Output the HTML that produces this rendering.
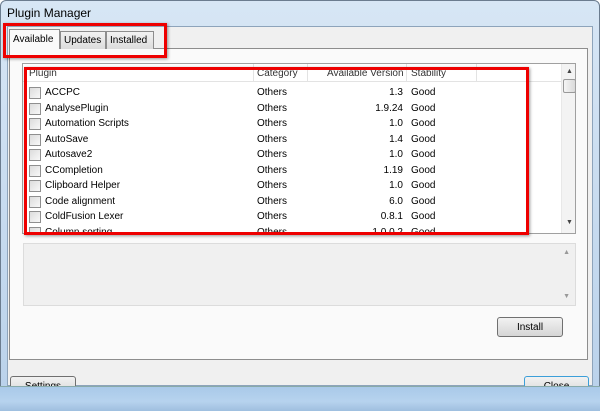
<!DOCTYPE html>
<html><head><style>
*{margin:0;padding:0;box-sizing:border-box}
body{width:600px;height:411px;overflow:hidden;background:#fff;font-family:"Liberation Sans",Tahoma,sans-serif;font-size:10px;color:#000;position:relative}
.frame{position:absolute;left:0;top:0;width:600px;height:411px;background:linear-gradient(#d7e6f5,#b9d1ea);border-radius:6px 6px 0 0;border:1px solid #6b7c8f}
.title{position:absolute;left:7px;top:6px;font-size:12px;color:#000}
.client{position:absolute;left:7px;top:26px;width:586px;height:360px;background:#f0f0f0;border:1px solid #8ea4bb}
.abs{position:absolute}
.tab{position:absolute;top:31px;height:18px;border:1px solid #8d8d8d;border-bottom:none;background:linear-gradient(#f2f2f2,#dcdcdc);font-size:10px;padding:3px 3px 0}
.panel{position:absolute;left:9px;top:48px;width:579px;height:312px;background:#fafafa;border:1px solid #8d8d8d}
.list{position:absolute;left:22px;top:63px;width:554px;height:171px;background:#fff;border:1px solid #a0a0a0;overflow:hidden}
.hdr{position:absolute;left:0;top:0;width:538px;height:18px;border-bottom:1px solid #e3e3e3;background:#fff}
.hdr span{position:absolute;top:4px;color:#333}
.row{position:absolute;left:0;height:15px;width:538px}
.row span{position:absolute;top:2px}
.cb{position:absolute;left:6px;top:2px;width:12px;height:12px;border:1px solid #8f8f8f;background:linear-gradient(135deg,#dcdcdc,#f8f8f8)}
.sb{position:absolute;left:538px;top:0;width:15px;height:169px;background:#f3f3f3;border-left:1px solid #e8e8e8}
.red{position:absolute;border:3px solid #e00;box-shadow:1px 1px 3px rgba(0,0,0,.4)}
.btn{position:absolute;height:20px;border:1px solid #707070;border-radius:3px;background:linear-gradient(#f2f2f2,#d5d5d5);text-align:center;font-size:10px;padding-top:4px}
</style></head><body>
<div class="frame"></div>
<div class="title">Plugin Manager</div>
<div class="client"></div>
<div class="panel"></div>
<div class="tab" style="left:9px;top:29px;width:51px;height:20px;background:#fafafa;padding-top:4px;z-index:2">Available</div>
<div class="tab" style="left:60px;width:46px">Updates</div>
<div class="tab" style="left:106px;width:48px">Installed</div>
<div class="list">
<div class="hdr"><span style="left:6px">Plugin</span><span style="left:234px">Category</span><span style="left:304px">Available Version</span><span style="left:388px">Stability</span>
<div class="abs" style="left:230px;top:0;width:1px;height:18px;background:#e3e3e3"></div>
<div class="abs" style="left:284px;top:0;width:1px;height:18px;background:#e3e3e3"></div>
<div class="abs" style="left:383px;top:0;width:1px;height:18px;background:#e3e3e3"></div>
<div class="abs" style="left:453px;top:0;width:1px;height:18px;background:#e3e3e3"></div>
</div>
<div class="row" style="top:21px"><div class="cb"></div><span style="left:22px">ACCPC</span><span style="left:234px">Others</span><span style="right:158px">1.3</span><span style="left:388px">Good</span></div>
<div class="row" style="top:36.5px"><div class="cb"></div><span style="left:22px">AnalysePlugin</span><span style="left:234px">Others</span><span style="right:158px">1.9.24</span><span style="left:388px">Good</span></div>
<div class="row" style="top:52px"><div class="cb"></div><span style="left:22px">Automation Scripts</span><span style="left:234px">Others</span><span style="right:158px">1.0</span><span style="left:388px">Good</span></div>
<div class="row" style="top:67.5px"><div class="cb"></div><span style="left:22px">AutoSave</span><span style="left:234px">Others</span><span style="right:158px">1.4</span><span style="left:388px">Good</span></div>
<div class="row" style="top:83px"><div class="cb"></div><span style="left:22px">Autosave2</span><span style="left:234px">Others</span><span style="right:158px">1.0</span><span style="left:388px">Good</span></div>
<div class="row" style="top:98.5px"><div class="cb"></div><span style="left:22px">CCompletion</span><span style="left:234px">Others</span><span style="right:158px">1.19</span><span style="left:388px">Good</span></div>
<div class="row" style="top:114px"><div class="cb"></div><span style="left:22px">Clipboard Helper</span><span style="left:234px">Others</span><span style="right:158px">1.0</span><span style="left:388px">Good</span></div>
<div class="row" style="top:129.5px"><div class="cb"></div><span style="left:22px">Code alignment</span><span style="left:234px">Others</span><span style="right:158px">6.0</span><span style="left:388px">Good</span></div>
<div class="row" style="top:145px"><div class="cb"></div><span style="left:22px">ColdFusion Lexer</span><span style="left:234px">Others</span><span style="right:158px">0.8.1</span><span style="left:388px">Good</span></div>
<div class="row" style="top:160.5px"><div class="cb"></div><span style="left:22px">Column sorting</span><span style="left:234px">Others</span><span style="right:158px">1.0.0.2</span><span style="left:388px">Good</span></div>
<div class="sb"><div class="abs" style="left:4px;top:4px;font-size:7px;color:#444">▲</div><div class="abs" style="left:1px;top:15px;width:13px;height:14px;border:1px solid #999;border-radius:2px;background:linear-gradient(90deg,#f5f5f5,#dadada)"></div><div class="abs" style="left:4px;top:155px;font-size:7px;color:#444">▼</div></div>
</div>
<div class="abs" style="left:23px;top:243px;width:553px;height:63px;background:#f0f0f0;border:1px solid #dcdcdc"><div class="abs" style="right:5px;top:5px;font-size:7px;color:#999">▲</div><div class="abs" style="right:5px;bottom:5px;font-size:7px;color:#999">▼</div></div>
<div class="btn" style="left:497px;top:317px;width:66px">Install</div>
<div class="btn" style="left:10px;top:376px;width:66px">Settings</div>
<div class="btn" style="left:524px;top:376px;width:65px;border-color:#3c9fd9">Close</div>
<div class="abs" style="left:0;top:386px;width:600px;height:25px;background:linear-gradient(#a9c9e9,#b7d3ee 60%,#9fbfdf);border-top:1px solid #8aa"></div>
<div class="red" style="left:3px;top:23px;width:164px;height:35px"></div>
<div class="red" style="left:24px;top:67px;width:505px;height:168px"></div>
</body></html>
